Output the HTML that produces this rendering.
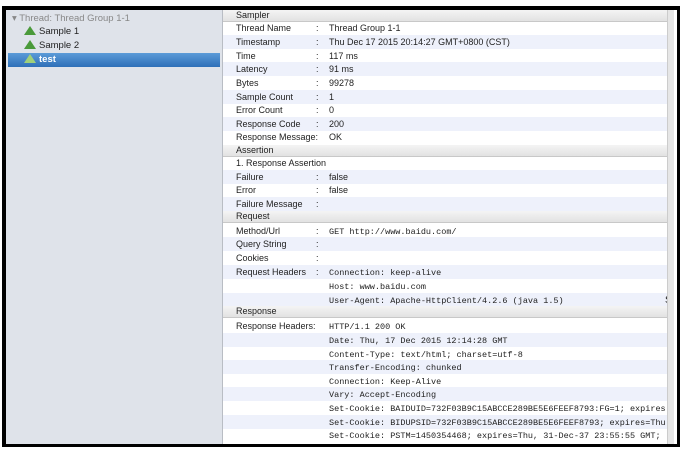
<!DOCTYPE html>
<html><head><meta charset="utf-8"><style>
body{margin:0;width:680px;height:449px;background:#fff;position:relative;overflow:hidden;font-family:"Liberation Sans",sans-serif;}
.frame{position:absolute;left:2px;top:6px;width:671px;height:434px;border:4px solid #000;border-bottom-width:3px;background:#fff;overflow:hidden}
.left{position:absolute;left:0;top:0;width:216px;height:100%;background:#dfe3ea;border-right:1px solid #b9bdc4}
.tree{position:absolute;font-size:9.5px;color:#222;white-space:nowrap}
.sel{position:absolute;left:2px;top:43px;width:212px;height:14px;background:linear-gradient(#5b9bd8,#2e6fb8)}
.ic{display:inline-block;width:0;height:0;border-left:6px solid transparent;border-right:6px solid transparent;border-bottom:9px solid #4a9a3a;vertical-align:-1px;margin-right:3px}
.r{position:absolute;left:217px;width:450px;height:14px;font-size:9px;color:#222;white-space:nowrap;margin-top:-3px}
.b{background:#eef1fb}
.h{background:linear-gradient(#f4f4f4,#e2e2e2);border-bottom:1px solid #c8c8c8;height:11px}
.r span{position:absolute;top:2px}
.m{font-family:"Liberation Mono",monospace;font-size:8.5px;top:3px!important}
.sb{position:absolute;left:661px;top:0;width:6px;height:100%;background:#e6e6e6;border-left:1px solid #ccc}
</style></head><body>
<div class="frame">
<div class="left">
<div class="tree" style="left:6px;top:3px;color:#888">▾ Thread: Thread Group 1-1</div>
<div class="tree" style="left:18px;top:16px"><span class="ic"></span>Sample 1</div>
<div class="tree" style="left:18px;top:30px"><span class="ic"></span>Sample 2</div>
<div class="sel"></div>
<div class="tree" style="left:18px;top:44px;color:#fff;font-weight:bold"><span class="ic" style="border-bottom-color:#9fd07a"></span>test</div>
</div>
<div class="r h" style="top:3px"><span style="left:13px;top:0">Sampler</span></div>
<div class="r" style="top:14px"><span style="left:13px">Thread Name</span><span style="left:93px">:</span><span style="left:106px">Thread Group 1-1</span></div>
<div class="r b" style="top:28px"><span style="left:13px">Timestamp</span><span style="left:93px">:</span><span style="left:106px">Thu Dec 17 2015 20:14:27 GMT+0800 (CST)</span></div>
<div class="r" style="top:42px"><span style="left:13px">Time</span><span style="left:93px">:</span><span style="left:106px">117 ms</span></div>
<div class="r b" style="top:55px"><span style="left:13px">Latency</span><span style="left:93px">:</span><span style="left:106px">91 ms</span></div>
<div class="r" style="top:69px"><span style="left:13px">Bytes</span><span style="left:93px">:</span><span style="left:106px">99278</span></div>
<div class="r b" style="top:83px"><span style="left:13px">Sample Count</span><span style="left:93px">:</span><span style="left:106px">1</span></div>
<div class="r" style="top:96px"><span style="left:13px">Error Count</span><span style="left:93px">:</span><span style="left:106px">0</span></div>
<div class="r b" style="top:110px"><span style="left:13px">Response Code</span><span style="left:93px">:</span><span style="left:106px">200</span></div>
<div class="r" style="top:123px"><span style="left:13px">Response Message:</span><span style="left:106px">OK</span></div>
<div class="r h" style="top:138px"><span style="left:13px;top:0">Assertion</span></div>
<div class="r" style="top:149px"><span style="left:13px">1. Response Assertion</span></div>
<div class="r b" style="top:163px"><span style="left:13px">Failure</span><span style="left:93px">:</span><span style="left:106px">false</span></div>
<div class="r" style="top:176px"><span style="left:13px">Error</span><span style="left:93px">:</span><span style="left:106px">false</span></div>
<div class="r b" style="top:190px"><span style="left:13px">Failure Message</span><span style="left:93px">:</span></div>
<div class="r h" style="top:204px"><span style="left:13px;top:0">Request</span></div>
<div class="r" style="top:217px"><span style="left:13px">Method/Url</span><span style="left:93px">:</span><span class="m" style="left:106px">GET http://www.baidu.com/</span></div>
<div class="r b" style="top:230px"><span style="left:13px">Query String</span><span style="left:93px">:</span></div>
<div class="r" style="top:244px"><span style="left:13px">Cookies</span><span style="left:93px">:</span></div>
<div class="r b" style="top:258px"><span style="left:13px">Request Headers</span><span style="left:93px">:</span><span class="m" style="left:106px">Connection: keep-alive</span></div>
<div class="r" style="top:272px"><span class="m" style="left:106px">Host: www.baidu.com</span></div>
<div class="r b" style="top:286px"><span class="m" style="left:106px">User-Agent: Apache-HttpClient/4.2.6 (java 1.5)</span><span style="left:442px;font-size:10px">S</span></div>
<div class="r h" style="top:299px"><span style="left:13px;top:0">Response</span></div>
<div class="r" style="top:312px"><span style="left:13px">Response Headers:</span><span class="m" style="left:106px">HTTP/1.1 200 OK</span></div>
<div class="r b" style="top:326px"><span class="m" style="left:106px">Date: Thu, 17 Dec 2015 12:14:28 GMT</span></div>
<div class="r" style="top:340px"><span class="m" style="left:106px">Content-Type: text/html; charset=utf-8</span></div>
<div class="r b" style="top:353px"><span class="m" style="left:106px">Transfer-Encoding: chunked</span></div>
<div class="r" style="top:367px"><span class="m" style="left:106px">Connection: Keep-Alive</span></div>
<div class="r b" style="top:380px"><span class="m" style="left:106px">Vary: Accept-Encoding</span></div>
<div class="r" style="top:394px"><span class="m" style="left:106px">Set-Cookie: BAIDUID=732F03B9C15ABCCE289BE5E6FEEF8793:FG=1; expires</span></div>
<div class="r b" style="top:408px"><span class="m" style="left:106px">Set-Cookie: BIDUPSID=732F03B9C15ABCCE289BE5E6FEEF8793; expires=Thu</span></div>
<div class="r" style="top:421px"><span class="m" style="left:106px">Set-Cookie: PSTM=1450354468; expires=Thu, 31-Dec-37 23:55:55 GMT;</span></div>
<div class="sb"></div>
</div>
</body></html>
